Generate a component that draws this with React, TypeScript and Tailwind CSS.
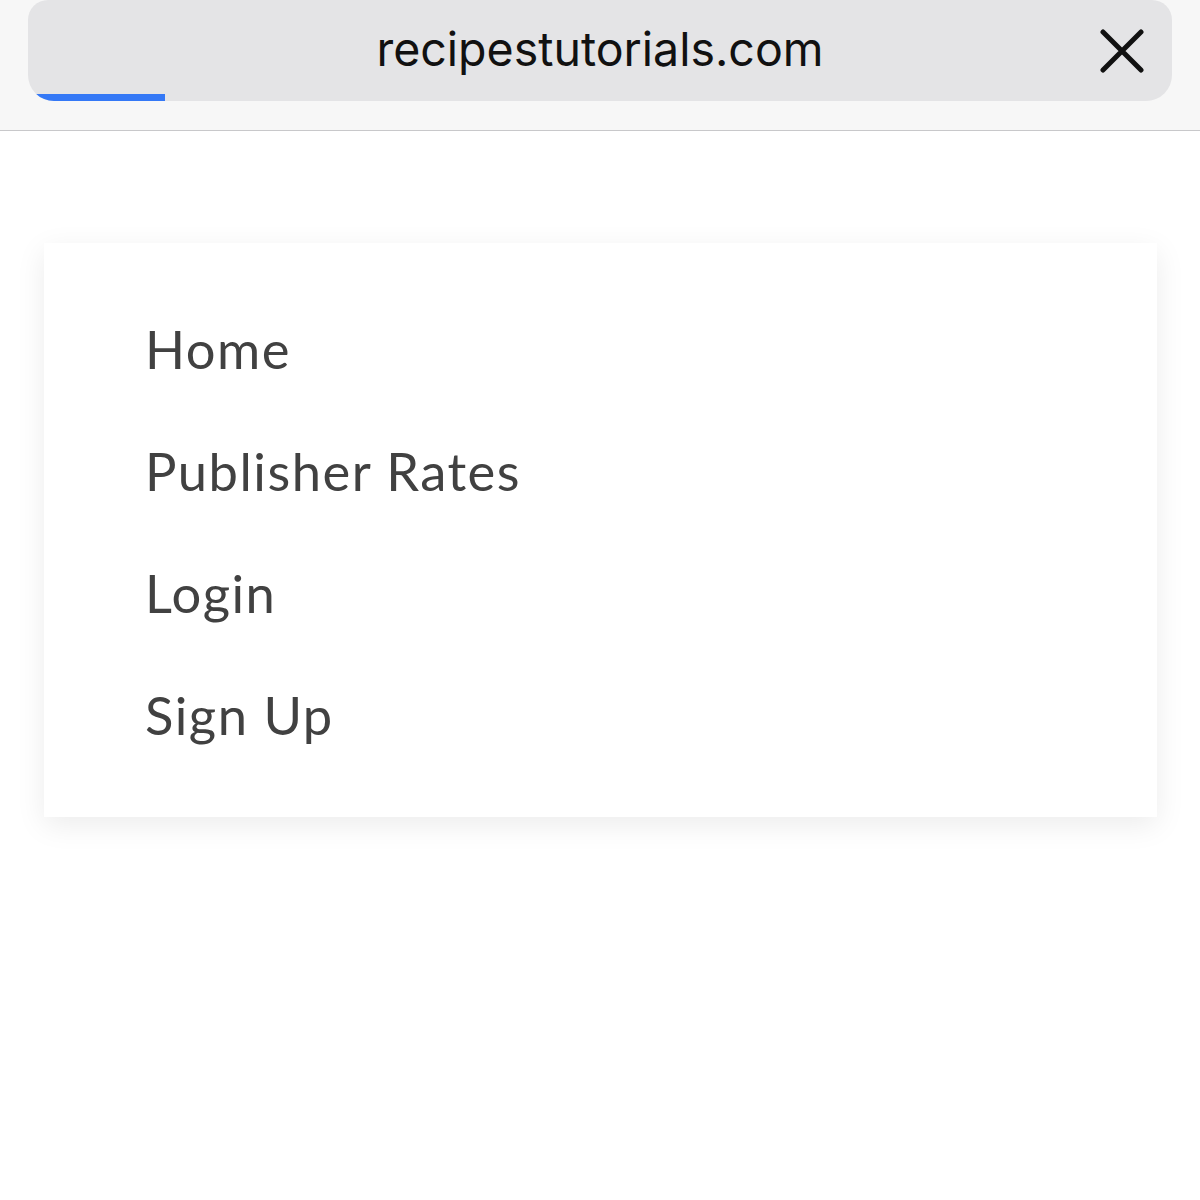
import React from "react";

export default function App() {
  const items = ["Home", "Publisher Rates", "Login", "Sign Up"];
  return (
    <div className="w-[1200px] h-[1200px] bg-white overflow-hidden">
      <div className="h-[131px] bg-[#f7f7f7] border-b border-[#c8c8ca] px-[28px]">
        <div className="relative h-[101px] rounded-b-[26px] rounded-t-[20px] bg-[#e4e4e6] overflow-hidden flex items-center justify-center">
          <span
            className="text-[46.5px] text-[#111] -mt-[1px]"
            style={{ fontFamily: "Inter, 'Liberation Sans', sans-serif" }}
          >
            recipestutorials.com
          </span>
          <svg
            className="absolute left-[1072px] top-[29px]"
            width="44"
            height="44"
            viewBox="0 0 44 44"
          >
            <path d="M3 3 L41 41 M41 3 L3 41" stroke="#111" strokeWidth="5" strokeLinecap="round" />
          </svg>
          <div className="absolute left-0 bottom-0 w-[137px] h-[7px] bg-[#3478f6]" />
        </div>
      </div>
      <div className="mt-[112px] ml-[44px] w-[1113px] bg-white shadow-[0_8px_28px_rgba(0,0,0,0.08)] pt-[45px] pb-[41px] pl-[101px]">
        {items.map((t) => (
          <div
            key={t}
            className="h-[122px] leading-[122px] text-[52.5px] tracking-[1.5px] text-[#414141]"
            style={{ fontFamily: "Lato, 'Open Sans', sans-serif" }}
          >
            {t}
          </div>
        ))}
      </div>
    </div>
  );
}
